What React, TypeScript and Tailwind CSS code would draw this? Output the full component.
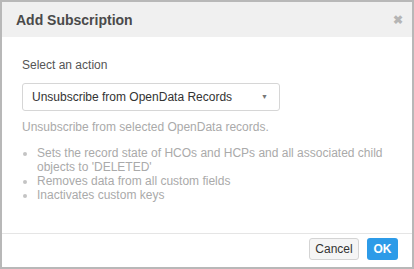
export default function App() {
  return (
    <div className="w-[414px] h-[269px] bg-white border-2 border-[#b8b8b8] flex flex-col font-['Liberation_Sans',Arial,sans-serif]">
      <div className="h-[35px] bg-[#f0f0f0] flex items-center justify-between pl-[14px] pr-[9px]">
        <span className="text-[14px] font-bold text-[#4a4a4a] pt-[1px]">Add Subscription</span>
        <span className="text-[12px] font-bold text-[#b5b5b5] leading-none">✖</span>
      </div>

      <div className="flex-1 px-[20px] pt-[21px]">
        <div className="text-[12px] text-[#555] leading-[14px]">Select an action</div>
        <div className="mt-[11px] w-[258px] h-[28px] border border-[#d6d6d6] rounded-[3px] flex items-center justify-between pl-[9px] pr-[11px]">
          <span className="text-[12px] text-[#333]">Unsubscribe from OpenData Records</span>
          <span className="text-[7px] text-[#777]">▼</span>
        </div>
        <div className="mt-[9px] text-[12px] text-[#aaa] leading-[14px]">
          Unsubscribe from selected OpenData records.
        </div>
        <ul className="mt-[12px] pl-[15px] list-disc marker:text-[#c4c4c4] text-[12px] text-[#aaa] leading-[14px]">
          <li>Sets the record state of HCOs and HCPs and all associated child objects to 'DELETED'</li>
          <li>Removes data from all custom fields</li>
          <li>Inactivates custom keys</li>
        </ul>
      </div>

      <div className="h-[34px] border-t border-[#e5e5e5] flex items-start justify-end gap-[8px] pr-[14px] pt-[4px]">
        <button className="h-[22px] w-[50px] bg-[#f5f5f5] border border-[#d4d4d4] rounded-[3px] text-[12px] text-[#333]">
          Cancel
        </button>
        <button className="h-[22px] w-[31px] bg-[#2d9be8] rounded-[3px] text-[12px] font-bold text-white">
          OK
        </button>
      </div>
    </div>
  );
}
